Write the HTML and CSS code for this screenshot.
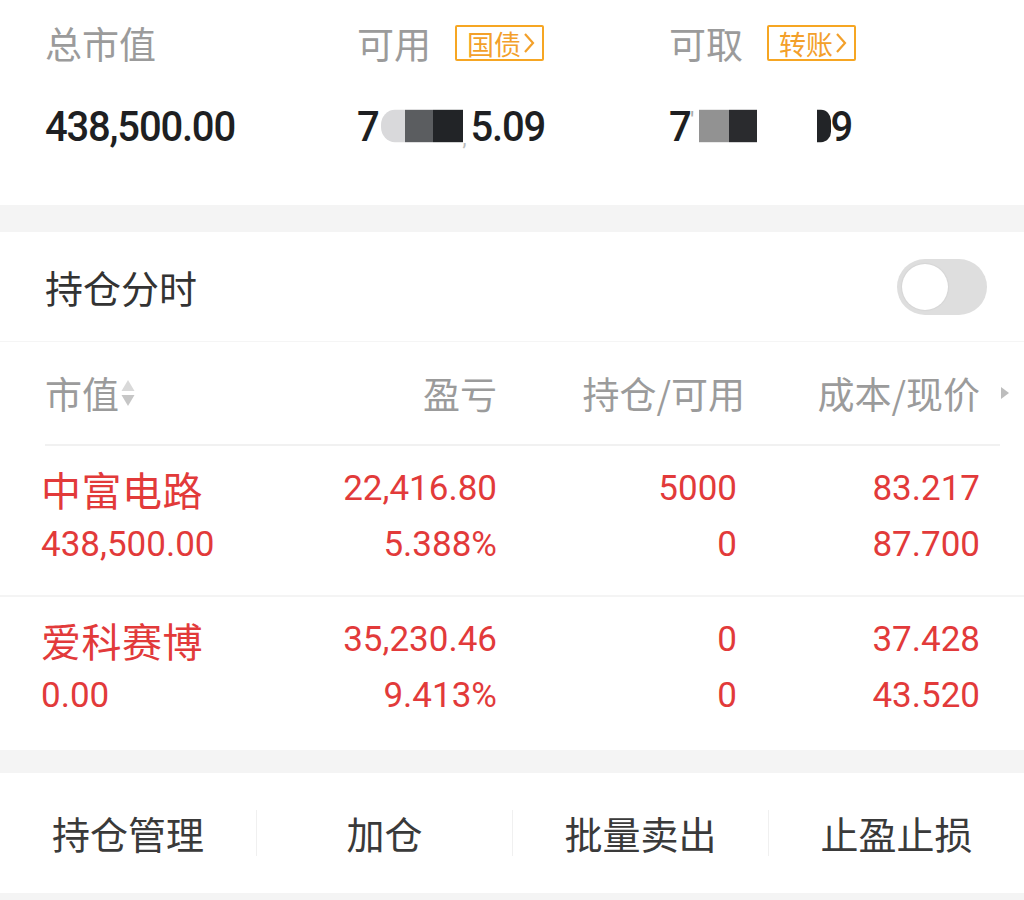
FILE: index.html
```html
<!DOCTYPE html>
<html lang="zh-CN">
<head>
<meta charset="utf-8">
<title>持仓</title>
<link rel="stylesheet" href="styles.css">
</head>
<body>
<div class="page">
  <section class="summary">
    <div class="sum-col">
      <div class="sum-label"><span>总市值</span></div>
      <div class="sum-value">438,500.00</div>
    </div>
    <div class="sum-col">
      <div class="sum-label"><span>可用</span><span class="badge">国债<svg class="chev" viewBox="0 0 12 22" width="12" height="22"><path d="M2 2 L10 11 L2 20" fill="none" stroke="#f3a02a" stroke-width="2.2"/></svg></span></div>
      <div class="sum-value">7<span class="mask m-light-round"></span><span class="mask m-mid"></span><span class="mask m-dark"></span><span class="dotmark">,</span>5.09</div>
    </div>
    <div class="sum-col">
      <div class="sum-label"><span>可取</span><span class="badge">转账<svg class="chev" viewBox="0 0 12 22" width="12" height="22"><path d="M2 2 L10 11 L2 20" fill="none" stroke="#f3a02a" stroke-width="2.2"/></svg></span></div>
      <div class="sum-value">7<span class="tick">'</span><span class="mask m-gray"></span><span class="mask m-dark2"></span><span class="mask m-blank"></span><span class="mask m-half"></span>9</div>
    </div>
  </section>

  <div class="gap gap-top"></div>

  <section class="holdings">
    <div class="toggle-row">
      <span class="toggle-title">持仓分时</span>
      <span class="switch"><span class="knob"></span></span>
    </div>

    <div class="table-head">
      <div class="th th-first">市值<svg class="sort" viewBox="0 0 14 32" width="14" height="32"><path d="M7 3 L13.5 14 L0.5 14 Z" fill="#d9d9d9"/><path d="M0.5 18 L13.5 18 L7 29 Z" fill="#c6c6c6"/></svg></div>
      <div class="th">盈亏</div>
      <div class="th th-hold">持仓/可用</div>
      <div class="th th-last">成本/现价<svg class="more" viewBox="0 0 10 14" width="10" height="14"><path d="M1 1 L9 7 L1 13 Z" fill="#bdbdbd"/></svg></div>
    </div>

    <div class="row">
      <div class="cell cell-name"><div class="name">中富电路</div><div class="num">438,500.00</div></div>
      <div class="cell"><div class="num">22,416.80</div><div class="num">5.388%</div></div>
      <div class="cell"><div class="num">5000</div><div class="num">0</div></div>
      <div class="cell"><div class="num">83.217</div><div class="num">87.700</div></div>
    </div>
    <div class="row">
      <div class="cell cell-name"><div class="name">爱科赛博</div><div class="num">0.00</div></div>
      <div class="cell"><div class="num">35,230.46</div><div class="num">9.413%</div></div>
      <div class="cell"><div class="num">0</div><div class="num">0</div></div>
      <div class="cell"><div class="num">37.428</div><div class="num">43.520</div></div>
    </div>
  </section>

  <div class="gap gap-mid"></div>

  <nav class="actions">
    <div class="action">持仓管理</div>
    <div class="action">加仓</div>
    <div class="action">批量卖出</div>
    <div class="action">止盈止损</div>
  </nav>
  <div class="gap gap-bottom"></div>
</div>
</body>
</html>
```

FILE: styles.css
```css
* { box-sizing: border-box; }

html, body {
  margin: 0;
  padding: 0;
  background: #ffffff;
}

body {
  font-family: "Noto Sans CJK SC", "Noto Sans", sans-serif;
  color: #333;
}

.page {
  width: 1024px;
  background: #fff;
}

/* ---------- summary ---------- */
.summary {
  height: 205px;
  display: flex;
  padding: 22px 0 0 45px;
}

.sum-col {
  width: 312px;
  display: flex;
  flex-direction: column;
}

.sum-label {
  height: 42px;
  display: flex;
  align-items: center;
  gap: 24px;
  font-size: 37px;
  color: #9b9b9b;
  line-height: 1;
}

.badge {
  display: inline-flex;
  align-items: center;
  justify-content: center;
  gap: 2px;
  height: 36px;
  padding: 0 7px 0 10px;
  border: 2px solid #f6a623;
  border-radius: 2px;
  color: #f3a02a;
  font-size: 27px;
  line-height: 1;
}

.chev { display: block; }

.sum-value {
  margin-top: 40px;
  height: 44px;
  display: flex;
  align-items: center;
  font-family: "Roboto", "Liberation Sans", sans-serif;
  font-weight: 500;
  font-size: 40px;
  letter-spacing: -1.2px;
  color: #1e1f22;
  transform: scaleY(1.08);
}

.mask {
  display: inline-block;
  height: 30px;
}
.m-light-round { width: 24px; background: #d9d9db; border-radius: 14px 0 0 14px; margin-left: 2px; }
.m-mid { width: 28px; background: #5b5d60; }
.m-dark { width: 30px; background: #222427; }
.dotmark { color: #bbb; font-size: 18px; width: 5px; align-self: flex-end; margin-right: 3px; }
.tick { color: #aaa; font-size: 20px; width: 6px; align-self: flex-start; margin-top: 4px; }
.m-gray { width: 30px; background: #929292; margin-left: 2px; }
.m-dark2 { width: 28px; background: #2a2b2e; }
.m-blank { width: 60px; background: #fff; }
.m-half { width: 14px; background: #222427; border-radius: 0 10px 10px 0; }

/* ---------- gaps ---------- */
.gap { background: #f4f4f4; }
.gap-top { height: 27px; }
.gap-mid { height: 23px; }
.gap-bottom { height: 10px; }

/* ---------- holdings ---------- */
.toggle-row {
  height: 110px;
  display: flex;
  align-items: center;
  justify-content: space-between;
  padding: 0 37px 0 45px;
  border-bottom: 1px solid #f5f5f5;
}

.toggle-title {
  font-size: 38px;
  color: #333;
}

.switch {
  width: 90px;
  height: 56px;
  border-radius: 28px;
  background: #dedede;
  padding: 5px;
  display: flex;
  align-items: center;
}

.knob {
  width: 46px;
  height: 46px;
  border-radius: 50%;
  background: #fff;
  box-shadow: 0 0 2px rgba(0,0,0,0.12);
}

.table-head {
  height: 104px;
  margin: 0 24px 0 45px;
  display: grid;
  grid-template-columns: 252px 200px 248px 235px;
  align-items: center;
  border-bottom: 2px solid #f1f1f1;
  font-size: 37px;
  color: #9b9b9b;
}

.th {
  text-align: right;
  display: flex;
  justify-content: flex-end;
  align-items: center;
}

.th-first { justify-content: flex-start; }

.sort { margin-left: 2px; }

.th-last { position: relative; }
.more {
  position: absolute;
  right: -30px;
  top: 50%;
  margin-top: -7px;
}

.row {
  height: 151px;
  padding: 15px 44px 0 41px;
  display: grid;
  grid-template-columns: 256px 200px 240px 243px;
  border-bottom: 2px solid #f4f4f4;
  color: #e23a3a;
}
.row:last-child { border-bottom: none; height: 153px; }

.cell {
  text-align: right;
}
.cell-name { text-align: left; }

.name, .num {
  height: 56px;
  line-height: 56px;
  white-space: nowrap;
}

.name {
  font-size: 40px;
  letter-spacing: 0.5px;
}

.num {
  font-family: "Roboto", "Liberation Sans", sans-serif;
  font-size: 35px;
  letter-spacing: 0;
}

/* ---------- actions ---------- */
.actions {
  height: 120px;
  display: grid;
  grid-template-columns: repeat(4, 1fr);
  align-items: center;
}

.action {
  text-align: center;
  font-size: 38px;
  color: #3a3a3a;
  line-height: 46px;
  border-left: 1px solid #f0f0f0;
}
.action:first-child { border-left: none; }
```
